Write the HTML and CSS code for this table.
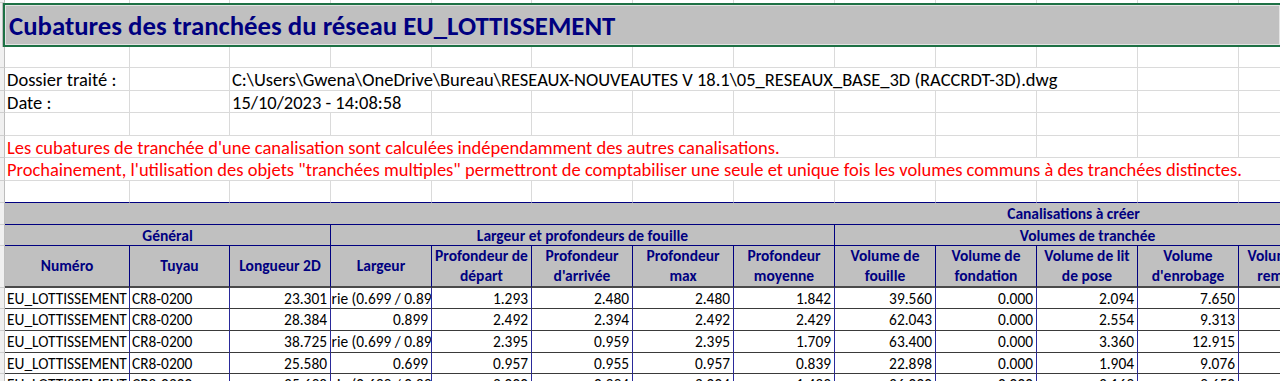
FILE: index.html
```html
<!DOCTYPE html>
<html lang="fr">
<head>
<meta charset="utf-8">
<title>Cubatures des tranchées</title>
<link rel="stylesheet" href="styles.css">
</head>
<body>
<div class="sheet">
  <div class="row h3">
    <div class="rh"></div>
    <div class="g nb"></div><div class="g nb"></div><div class="g nb"></div><div class="g nb"></div><div class="g nb"></div><div class="g nb"></div><div class="g nb"></div><div class="g nb"></div><div class="g nb"></div><div class="g nb"></div><div class="g nb"></div><div class="g nb"></div><div class="g nb"></div>
  </div>
  <div class="trow">
    <div class="rh"></div>
    <div class="title">Cubatures des tranchées du réseau EU_LOTTISSEMENT</div>
  </div>
  <div class="row h21">
    <div class="rh"></div>
    <div class="g"></div><div class="g"></div><div class="g"></div><div class="g"></div><div class="g"></div><div class="g"></div><div class="g"></div><div class="g"></div><div class="g"></div><div class="g"></div><div class="g"></div><div class="g"></div><div class="g"></div>
  </div>
  <div class="row h23">
    <div class="rh"></div>
    <div class="g">Dossier traité :</div><div class="g"></div>
    <div class="g s9">C:\Users\Gwena\OneDrive\Bureau\RESEAUX-NOUVEAUTES V 18.1\05_RESEAUX_BASE_3D (RACCRDT-3D).dwg</div>
    <div class="g"></div><div class="g"></div>
  </div>
  <div class="row h22">
    <div class="rh"></div>
    <div class="g">Date :</div><div class="g"></div>
    <div class="g s2">15/10/2023 - 14:08:58</div>
    <div class="g"></div><div class="g"></div><div class="g"></div><div class="g"></div><div class="g"></div><div class="g"></div><div class="g"></div><div class="g"></div><div class="g"></div>
  </div>
  <div class="row h23">
    <div class="rh"></div>
    <div class="g"></div><div class="g"></div><div class="g"></div><div class="g"></div><div class="g"></div><div class="g"></div><div class="g"></div><div class="g"></div><div class="g"></div><div class="g"></div><div class="g"></div><div class="g"></div><div class="g"></div>
  </div>
  <div class="row h22">
    <div class="rh"></div>
    <div class="g red s8">Les cubatures de tranchée d'une canalisation sont calculées indépendamment des autres canalisations.</div>
    <div class="g"></div><div class="g"></div><div class="g"></div><div class="g"></div><div class="g"></div>
  </div>
  <div class="row h23">
    <div class="rh"></div>
    <div class="g red s13">Prochainement, l'utilisation des objets "tranchées multiples" permettront de comptabiliser une seule et unique fois les volumes communs à des tranchées distinctes.</div>
  </div>
  <div class="row h22">
    <div class="rh"></div>
    <div class="g nvb"></div><div class="g nvb"></div><div class="g nvb"></div><div class="g nvb"></div><div class="g nvb"></div><div class="g nvb"></div><div class="g nvb"></div><div class="g nvb"></div><div class="g nvb"></div><div class="g nvb"></div><div class="g nvb"></div><div class="g nvb"></div><div class="g nvb"></div>
  </div>

  <div class="row h22">
    <div class="rh"></div>
    <div class="hd s8 nr"></div>
    <div class="hd s5 nr canal">Canalisations à créer</div>
  </div>
  <div class="row h21">
    <div class="rh"></div>
    <div class="hd s3">Général</div>
    <div class="hd s5">Largeur et profondeurs de fouille</div>
    <div class="hd s5 nr">Volumes de tranchée</div>
  </div>
  <div class="row h42">
    <div class="rh"></div>
    <div class="hd hb">Numéro</div>
    <div class="hd hb">Tuyau</div>
    <div class="hd hb">Longueur 2D</div>
    <div class="hd hb">Largeur</div>
    <div class="hd hb">Profondeur de départ</div>
    <div class="hd hb">Profondeur d'arrivée</div>
    <div class="hd hb">Profondeur max</div>
    <div class="hd hb">Profondeur moyenne</div>
    <div class="hd hb">Volume de fouille</div>
    <div class="hd hb">Volume de fondation</div>
    <div class="hd hb">Volume de lit de pose</div>
    <div class="hd hb">Volume d'enrobage</div>
    <div class="hd hb last">Volume de remblai</div>
  </div>

  <div class="row h21">
    <div class="rh"></div>
    <div class="d">EU_LOTTISSEMENT</div><div class="d">CR8-0200</div>
    <div class="d n">23.301</div><div class="d clip">rie (0.699 / 0.89</div>
    <div class="d n">1.293</div><div class="d n">2.480</div><div class="d n">2.480</div><div class="d n">1.842</div>
    <div class="d n">39.560</div><div class="d n">0.000</div><div class="d n">2.094</div><div class="d n">7.650</div><div class="d n"></div>
  </div>
  <div class="row h22">
    <div class="rh"></div>
    <div class="d">EU_LOTTISSEMENT</div><div class="d">CR8-0200</div>
    <div class="d n">28.384</div><div class="d n">0.899</div>
    <div class="d n">2.492</div><div class="d n">2.394</div><div class="d n">2.492</div><div class="d n">2.429</div>
    <div class="d n">62.043</div><div class="d n">0.000</div><div class="d n">2.554</div><div class="d n">9.313</div><div class="d n"></div>
  </div>
  <div class="row h22">
    <div class="rh"></div>
    <div class="d">EU_LOTTISSEMENT</div><div class="d">CR8-0200</div>
    <div class="d n">38.725</div><div class="d clip">rie (0.699 / 0.89</div>
    <div class="d n">2.395</div><div class="d n">0.959</div><div class="d n">2.395</div><div class="d n">1.709</div>
    <div class="d n">63.400</div><div class="d n">0.000</div><div class="d n">3.360</div><div class="d n">12.915</div><div class="d n"></div>
  </div>
  <div class="row h21">
    <div class="rh"></div>
    <div class="d">EU_LOTTISSEMENT</div><div class="d">CR8-0200</div>
    <div class="d n">25.580</div><div class="d n">0.699</div>
    <div class="d n">0.957</div><div class="d n">0.955</div><div class="d n">0.957</div><div class="d n">0.839</div>
    <div class="d n">22.898</div><div class="d n">0.000</div><div class="d n">1.904</div><div class="d n">9.076</div><div class="d n"></div>
  </div>
  <div class="row h22">
    <div class="rh"></div>
    <div class="d">EU_LOTTISSEMENT</div><div class="d">CR8-0200</div>
    <div class="d n">35.698</div><div class="d clip">rie (0.699 / 0.89</div>
    <div class="d n">2.000</div><div class="d n">0.994</div><div class="d n">2.004</div><div class="d n">1.483</div>
    <div class="d n">36.000</div><div class="d n">0.000</div><div class="d n">3.169</div><div class="d n">9.650</div><div class="d n"></div>
  </div>
</div>
</body>
</html>
```

FILE: styles.css
```css
* { box-sizing: border-box; margin: 0; padding: 0; }
html, body { background: #ffffff; }
body {
  width: 1280px;
  height: 381px;
  overflow: hidden;
  font-family: Carlito, Calibri, "Liberation Sans", sans-serif;
  font-size: 16px;
  color: #000;
}
.sheet { width: 1280px; overflow: hidden; }

.row {
  display: grid;
  grid-template-columns: 5px 125px 100px 101px 101px 100px 101px 101px 101px 101px 101px 101px 101px 101px;
  width: 1346px;
}
.h3 { height: 3px; }
.h21 { height: 21px; }
.h22 { height: 22px; }
.h23 { height: 23px; }
.h42 { height: 42px; }

.rh {
  background: #f0f0f0;
  border-right: 1px solid #bdbdbd;
  border-bottom: 1px solid #cfcfcf;
}

.g {
  border-right: 1px solid #dadada;
  border-bottom: 1px solid #dadada;
  white-space: nowrap;
  overflow: hidden;
  padding: 1px 2px 0 2px;
  display: flex;
  align-items: center;
  font-size: 18.5px;
}
.g.nb { border-bottom: none; }
.g.nvb { border-bottom: 1px solid #000080; }
.red { color: #ff0000; }

.s2 { grid-column: span 2; }
.s3 { grid-column: span 3; }
.s5 { grid-column: span 5; }
.s8 { grid-column: span 8; }
.s9 { grid-column: span 9; }
.s13 { grid-column: span 13; }

.trow {
  display: grid;
  grid-template-columns: 3px 1fr;
  height: 44px;
}
.trow .rh { border-bottom: none; }
.title {
  background: #c0c0c0;
  border: 2px solid #1e7145;
  border-right: none;
  box-shadow: inset 0 0 0 1px #e4e4e4;
  color: #000080;
  font-weight: bold;
  font-size: 26.8px;
  padding-left: 4px;
  display: flex;
  align-items: center;
  white-space: nowrap;
}

.hd {
  background: #c0c0c0;
  color: #000080;
  font-weight: bold;
  font-size: 15.5px;
  border-right: 1px solid #000080;
  border-bottom: 1px solid #000080;
  display: flex;
  align-items: center;
  justify-content: center;
  text-align: center;
  white-space: nowrap;
  overflow: hidden;
}
.hd.nr { border-right: none; }
.hd.canal { padding-right: 28px; }
.hd.hb {
  white-space: normal;
  line-height: 20px;
  border-bottom: 2px solid #4a4a4a;
  padding: 0 3px;
}
.hd.hb.last { padding: 0 14px 0 0; }

.d {
  border-right: 1px solid #2a2a9a;
  border-bottom: 1px solid #3a3a3a;
  white-space: nowrap;
  overflow: hidden;
  padding: 0 3px 0 2px;
  display: flex;
  align-items: center;
  font-size: 15.4px;
}
.d.n { justify-content: flex-end; }
.d.clip { justify-content: center; padding: 0 0 0 1px; }
```
